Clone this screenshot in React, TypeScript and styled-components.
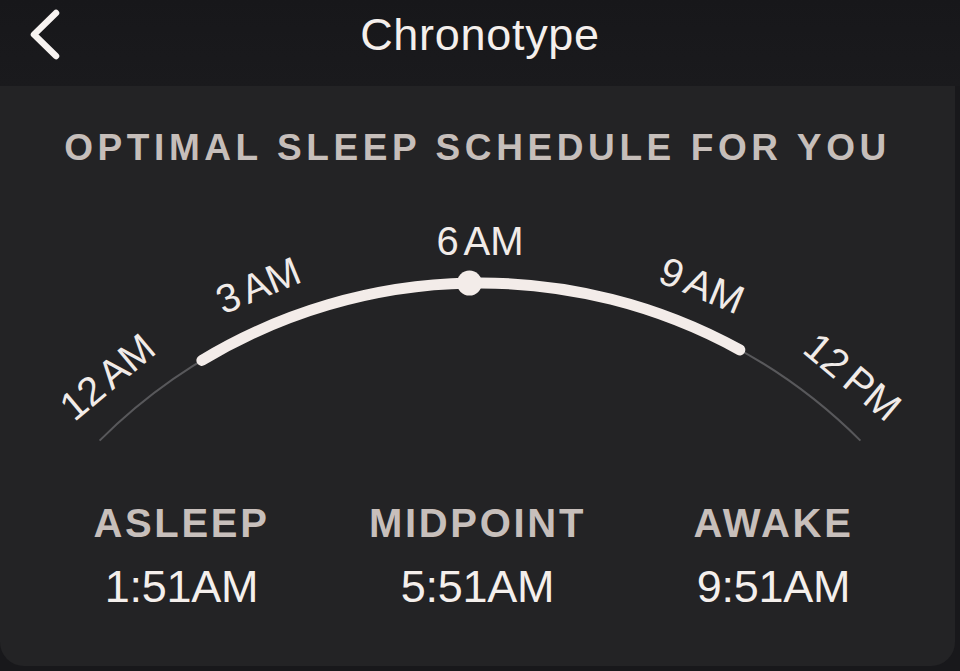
import React from 'react'
import styled, { createGlobalStyle } from 'styled-components'

const GlobalStyle = createGlobalStyle`
    html, body {
        margin: 0;
        padding: 0;
        background: #18181b;
    }
    body {
        font-family: "Liberation Sans", Arial, sans-serif;
        -webkit-font-smoothing: antialiased;
    }
`

const Screen = styled.div`
    height: 671px;
    display: flex;
    flex-direction: column;
    background: #18181b;
    overflow: hidden;
`
const Header = styled.header`
    height: 86px;
    flex-shrink: 0;
    display: grid;
    grid-template-columns: 1fr auto 1fr;
    background: linear-gradient(#17171a, #1a1a1d);
`
const BackButton = styled.button`
    width: 70px;
    height: 70px;
    padding: 0;
    border: none;
    background: none;
    cursor: pointer;
    svg {
        display: block;
    }
`
const Title = styled.h1`
    margin: 0;
    padding-top: 12px;
    font-size: 45px;
    line-height: 45px;
    font-weight: 400;
    letter-spacing: 0.7px;
    color: #f4efec;
`
const Card = styled.section`
    flex: 1;
    margin: 0 5px 5px 0;
    background: #232325;
    border-radius: 0 0 24px 24px;
    padding-top: 43px;
    display: flex;
    flex-direction: column;
    align-items: center;
`
const Heading = styled.h2`
    margin: 0;
    font-size: 37px;
    line-height: 37px;
    font-weight: 700;
    letter-spacing: 4.6px;
    color: #c6beba;
    white-space: nowrap;
`
const Dial = styled.svg`
    display: block;
    margin-top: 14px;
    flex-shrink: 0;
    text {
        font-family: "Liberation Sans", Arial, sans-serif;
        font-size: 40px;
        word-spacing: -4px;
        fill: #f1ebe8;
    }
`
const Stats = styled.div`
    margin-top: 43px;
    display: grid;
    grid-template-columns: repeat(3, 296px);
    justify-content: center;
`
const Stat = styled.div`
    display: flex;
    flex-direction: column;
    align-items: center;
    gap: 21px;
`
const StatLabel = styled.div`
    font-size: 40px;
    line-height: 40px;
    font-weight: 700;
    letter-spacing: 2.7px;
    color: #c7bfbb;
`
const StatValue = styled.div`
    font-size: 45px;
    line-height: 45px;
    letter-spacing: -0.3px;
    color: #f4efec;
`

// dial geometry: 12 hours spread over 90 degrees of a wide circle
const CX = 480
const CY = 641
const R = 538
const LABEL_R = 566
const DEG_PER_HOUR = 7.5

const angleOf = (hours: number) => -45 + hours * DEG_PER_HOUR

const pointAt = (deg: number, r = R) => {
    const a = (deg * Math.PI) / 180
    return { x: CX + r * Math.sin(a), y: CY - r * Math.cos(a) }
}

const arcPath = (from: number, to: number) => {
    const a = pointAt(from)
    const b = pointAt(to)
    return `M ${a.x.toFixed(1)} ${a.y.toFixed(1)} A ${R} ${R} 0 0 1 ${b.x.toFixed(1)} ${b.y.toFixed(1)}`
}

type Tick = { text: string, deg: number }

const ticks: Tick[] = [
    { text: '12 AM', deg: -40 },
    { text: '3 AM', deg: angleOf(3) },
    { text: '6 AM', deg: angleOf(6) },
    { text: '9 AM', deg: angleOf(9) },
    { text: '12 PM', deg: 40 },
]

type StatItem = { label: string, hours: number, value: string }

const schedule: StatItem[] = [
    { label: 'ASLEEP', hours: 1 + 51 / 60, value: '1:51AM' },
    { label: 'MIDPOINT', hours: 5 + 51 / 60, value: '5:51AM' },
    { label: 'AWAKE', hours: 9 + 51 / 60, value: '9:51AM' },
]

const SleepDial = ({ start, mid, end }: { start: number, mid: number, end: number }) => {
    const dot = pointAt(angleOf(mid))
    return (
        <Dial width={955} height={280} viewBox="0 0 955 280">
            <path d={arcPath(-45, 45)} fill="none" stroke="#58585b" strokeWidth={2} />
            <path
                d={arcPath(angleOf(start), angleOf(end))}
                fill="none"
                stroke="#f3ece9"
                strokeWidth={11}
                strokeLinecap="round"
            />
            <circle cx={dot.x} cy={dot.y} r={12.5} fill="#f3ece9" />
            {ticks.map(t => (
                <text
                    key={t.text}
                    x={CX}
                    y={CY - LABEL_R}
                    textAnchor="middle"
                    transform={`rotate(${t.deg} ${CX} ${CY})`}
                >
                    {t.text}
                </text>
            ))}
        </Dial>
    )
}

const App = () => {
    const [asleep, midpoint, awake] = schedule
    return (
        <Screen>
            <GlobalStyle />
            <Header>
                <div>
                    <BackButton aria-label="Back">
                        <svg width="70" height="70" viewBox="0 0 70 70">
                            <polyline
                                points="56,13 34,34.5 56,56"
                                fill="none"
                                stroke="#f7f3f1"
                                strokeWidth={6.5}
                                strokeLinecap="round"
                                strokeLinejoin="round"
                            />
                        </svg>
                    </BackButton>
                </div>
                <Title>Chronotype</Title>
                <div />
            </Header>
            <Card>
                <Heading>OPTIMAL SLEEP SCHEDULE FOR YOU</Heading>
                <SleepDial start={asleep.hours} mid={midpoint.hours} end={awake.hours} />
                <Stats>
                    {schedule.map(s => (
                        <Stat key={s.label}>
                            <StatLabel>{s.label}</StatLabel>
                            <StatValue>{s.value}</StatValue>
                        </Stat>
                    ))}
                </Stats>
            </Card>
        </Screen>
    )
}

export default App
